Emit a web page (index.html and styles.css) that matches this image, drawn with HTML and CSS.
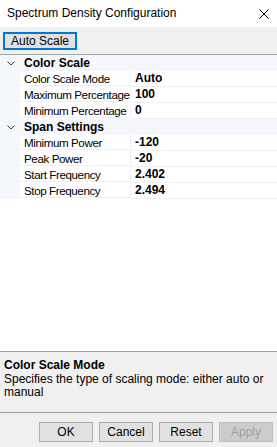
FILE: index.html
```html
<!DOCTYPE html>
<html lang="en">
<head>
    <meta charset="UTF-8">
    <title>Spectrum Density Configuration</title>
    <link rel="stylesheet" href="styles.css">
</head>
<body>

    <div class="window">
        <div class="titlebar">
            <span class="title">Spectrum Density Configuration</span>
            <svg class="close" width="10" height="10" viewBox="0 0 10 10">
                <path d="M0.5 0.5 L9.5 9.5 M9.5 0.5 L0.5 9.5" stroke="#000" stroke-width="1" fill="none"/>
            </svg>
        </div>

        <!-- Toolbar -->
        <div class="toolbar">
            <button class="tool-btn">Auto Scale</button>
        </div>

        <!-- Property grid -->
        <div class="grid">
            <div class="category">
                <span class="toggle"><svg width="8" height="5" viewBox="0 0 8 5"><path d="M0.5 0.5 L4 4 L7.5 0.5" stroke="#404040" fill="none"/></svg></span>
                <span class="cat-name">Color Scale</span>
            </div>
            <div class="prop"><span class="margin"></span><span class="name">Color Scale Mode</span><span class="value">Auto</span></div>
            <div class="prop"><span class="margin"></span><span class="name">Maximum Percentage</span><span class="value">100</span></div>
            <div class="prop"><span class="margin"></span><span class="name">Minimum Percentage</span><span class="value">0</span></div>

            <div class="category">
                <span class="toggle"><svg width="8" height="5" viewBox="0 0 8 5"><path d="M0.5 0.5 L4 4 L7.5 0.5" stroke="#404040" fill="none"/></svg></span>
                <span class="cat-name">Span Settings</span>
            </div>
            <div class="prop"><span class="margin"></span><span class="name">Minimum Power</span><span class="value">-120</span></div>
            <div class="prop"><span class="margin"></span><span class="name">Peak Power</span><span class="value">-20</span></div>
            <div class="prop"><span class="margin"></span><span class="name">Start Frequency</span><span class="value">2.402</span></div>
            <div class="prop"><span class="margin"></span><span class="name">Stop Frequency</span><span class="value">2.494</span></div>
        </div>

        <!-- Help panel -->
        <div class="help">
            <div class="help-title">Color Scale Mode</div>
            <div class="help-text">Specifies the type of scaling mode: either auto or manual</div>
        </div>

        <div class="buttons">
            <button class="btn">OK</button>
            <button class="btn">Cancel</button>
            <button class="btn">Reset</button>
            <button class="btn" disabled>Apply</button>
        </div>
    </div>

</body>
</html>
```

FILE: styles.css
```css
body {
    margin: 0;
    font-family: 'Liberation Sans', Arial, sans-serif;
    font-size: 12px;
    color: #000;
    background: #fff;
}

.window {
    width: 277px;
    height: 447px;
    display: flex;
    flex-direction: column;
    overflow: hidden;
}

.titlebar {
    height: 27px;
    flex: none;
    display: flex;
    align-items: center;
    justify-content: space-between;
    padding: 0 8px 0 7px;
    background: #fff;
}

.title {
    font-size: 12px;
    margin-top: -1px;
}

.close {
    margin-top: 1px;
}

.toolbar {
    flex: none;
    height: 28px;
    box-sizing: border-box;
    background: #f0f0f0;
    border-bottom: 1px solid #a0a0a0;
    padding: 5px 0 0 3px;
}

.tool-btn {
    width: 74px;
    height: 18px;
    padding: 0;
    font-family: inherit;
    font-size: 12px;
    color: #000;
    background: #e1e1e1;
    border: 2px solid #0078d7;
    line-height: 14px;
}

.grid {
    flex: 1;
    background: #fff;
}

.category {
    height: 16px;
    display: flex;
    align-items: center;
    background: #f4f7fc;
}

.toggle {
    width: 20px;
    display: flex;
    justify-content: center;
    padding-left: 2px;
    box-sizing: border-box;
}

.cat-name {
    font-weight: bold;
    padding-left: 4px;
}

.prop {
    height: 16px;
    display: flex;
}

.margin {
    width: 20px;
    flex: none;
    background: #f4f7fc;
}

.name,
.value {
    height: 15px;
    line-height: 15px;
    border-bottom: 1px solid #f0f0f0;
}

.name {
    width: 111px;
    flex: none;
    box-sizing: border-box;
    padding-left: 4px;
    border-right: 1px solid #f0f0f0;
    font-size: 11.6px;
    letter-spacing: -0.4px;
    white-space: nowrap;
    overflow: hidden;
}

.value {
    flex: 1;
    padding-left: 4px;
    font-weight: bold;
}

.help {
    flex: none;
    height: 62px;
    box-sizing: border-box;
    background: #f0f0f0;
    border-top: 1px solid #a0a0a0;
    border-bottom: 1px solid #a0a0a0;
    padding: 7px 6px 0 4px;
    line-height: 13px;
}

.help-title {
    font-weight: bold;
    margin-bottom: 1px;
}

.buttons {
    flex: none;
    height: 34px;
    background: #f0f0f0;
    display: flex;
    justify-content: flex-end;
    gap: 6px;
    padding: 9px 4px 0 0;
    box-sizing: border-box;
}

.btn {
    width: 54px;
    height: 20px;
    padding: 0;
    font-family: inherit;
    font-size: 12px;
    color: #000;
    background: #e1e1e1;
    border: 1px solid #adadad;
}

.btn:disabled {
    color: #a0a0a0;
    background: #cccccc;
    border-color: #bfbfbf;
}
```
